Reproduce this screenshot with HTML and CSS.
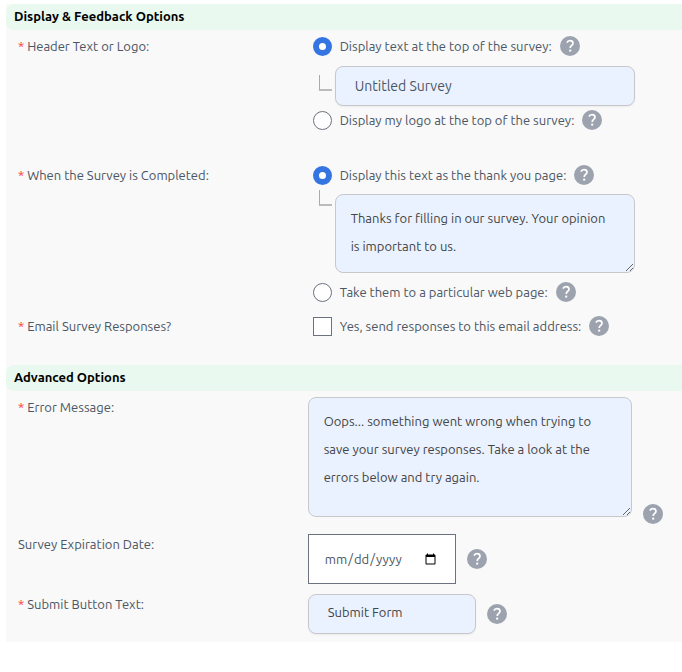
FILE: index.html
```html
<!DOCTYPE html>
<html lang="en">
<head>
    <meta charset="UTF-8">
    <meta name="viewport" content="width=device-width, initial-scale=1.0">
    <title>Survey Settings</title>
    <link rel="stylesheet" href="styles.css">
</head>
<body>
    <!-- shared help icon -->
    <svg class="sprite" aria-hidden="true">
        <symbol id="help-icon" viewBox="0 0 20 20">
            <circle cx="10" cy="10" r="10" fill="#9ca3af"/>
            <path d="M7 6.6C7.5 5.2 8.6 4.6 10 4.6c1.8 0 3 1 3 2.6 0 2.2-2.8 2.4-2.8 4.8" fill="none" stroke="#fff" stroke-width="1.7"/>
            <rect x="9.2" y="13.6" width="2" height="2" fill="#fff"/>
        </symbol>
    </svg>

    <form class="settings">
        <h2 class="section-title">Display &amp; Feedback Options</h2>

        <div class="row row-spaced">
            <div class="row-label"><span class="required">*</span> Header Text or Logo:</div>
            <div class="options">
                <div class="option">
                    <input type="radio" id="headerText" name="header" checked>
                    <label for="headerText">Display text at the top of the survey:</label>
                    <button type="button" class="help" aria-label="Help"><svg><use href="#help-icon"/></svg></button>
                </div>
                <div class="nested">
                    <span class="branch"></span>
                    <input type="text" class="field title-field" value="Untitled Survey" aria-label="Survey header text">
                </div>
                <div class="option">
                    <input type="radio" id="headerLogo" name="header">
                    <label for="headerLogo">Display my logo at the top of the survey:</label>
                    <button type="button" class="help" aria-label="Help"><svg><use href="#help-icon"/></svg></button>
                </div>
            </div>
        </div>

        <div class="row">
            <div class="row-label"><span class="required">*</span> When the Survey is Completed:</div>
            <div class="options">
                <div class="option">
                    <input type="radio" id="doneText" name="completed" checked>
                    <label for="doneText">Display this text as the thank you page:</label>
                    <button type="button" class="help" aria-label="Help"><svg><use href="#help-icon"/></svg></button>
                </div>
                <div class="nested nested-tall">
                    <span class="branch"></span>
                    <textarea class="field thanks-field" aria-label="Thank you text">Thanks for filling in our survey. Your opinion is important to us.</textarea>
                </div>
                <div class="option">
                    <input type="radio" id="donePage" name="completed">
                    <label for="donePage">Take them to a particular web page:</label>
                    <button type="button" class="help" aria-label="Help"><svg><use href="#help-icon"/></svg></button>
                </div>
            </div>
        </div>

        <div class="row row-spaced">
            <div class="row-label"><span class="required">*</span> Email Survey Responses?</div>
            <div class="options">
                <div class="option">
                    <input type="checkbox" id="emailResponses">
                    <label for="emailResponses">Yes, send responses to this email address:</label>
                    <button type="button" class="help" aria-label="Help"><svg><use href="#help-icon"/></svg></button>
                </div>
            </div>
        </div>

        <h2 class="section-title">Advanced Options</h2>

        <div class="row row-tight">
            <label class="row-label" for="errorMessage"><span class="required">*</span> Error Message:</label>
            <div class="control control-end">
                <textarea class="field error-field" id="errorMessage">Oops... something went wrong when trying to save your survey responses. Take a look at the errors below and try again.</textarea>
                <button type="button" class="help" aria-label="Help"><svg><use href="#help-icon"/></svg></button>
            </div>
        </div>

        <div class="row row-tight">
            <label class="row-label" for="expiration">Survey Expiration Date:</label>
            <div class="control">
                <input type="date" class="date-field" id="expiration">
                <button type="button" class="help" aria-label="Help"><svg><use href="#help-icon"/></svg></button>
            </div>
        </div>

        <div class="row row-tight">
            <label class="row-label" for="submitText"><span class="required">*</span> Submit Button Text:</label>
            <div class="control">
                <input type="text" class="field submit-field" id="submitText" value="Submit Form">
                <button type="button" class="help" aria-label="Help"><svg><use href="#help-icon"/></svg></button>
            </div>
        </div>
    </form>
</body>
</html>
```
FILE: styles.css
```css
* {
    box-sizing: border-box;
}
body {
    margin: 0;
    padding: 4px 0 0 6px;
    background: #fff;
    color: #4b5563;
    font-family: Ubuntu, "Noto Sans", sans-serif;
    font-size: 13px;
    line-height: 20px;
}
input,
textarea,
button {
    margin: 0;
    color: inherit;
    font: inherit;
}
.sprite {
    position: absolute;
    width: 0;
    height: 0;
}
.settings {
    padding-bottom: 4px;
    background: #f9f9f9;
}
.section-title {
    margin: 0;
    padding: 2px 8px 4px;
    background: #e9f9ef;
    border-radius: 8px 0 0 8px;
    color: #000;
    font-size: 13px;
    font-weight: 600;
}
.row {
    display: grid;
    grid-template-columns: 43% 1fr;
    padding: 6px 0 8px;
}
.row-spaced {
    padding-bottom: 29px;
}
.row-tight {
    padding-bottom: 4px;
}
.row-label {
    padding-left: 12px;
}
.required {
    color: #f33;
}
.options {
    padding-left: 16px;
}
.option {
    display: flex;
    align-items: center;
    gap: 8px;
}
.help {
    flex: none;
    width: 20px;
    height: 20px;
    padding: 0;
    background: none;
    border: none;
    cursor: pointer;
}
.help svg {
    display: block;
    width: 20px;
    height: 20px;
}

/* radios and tick box */
input[type="radio"],
input[type="checkbox"] {
    flex: none;
    appearance: none;
    width: 19px;
    height: 19px;
    background: #fff;
    border: 1px solid #6b7280;
}
input[type="radio"] {
    border-radius: 50%;
}
input[type="radio"]:checked {
    border: 6px solid #3575e2;
}

/* field hanging under a radio */
.nested {
    display: flex;
    align-items: flex-start;
    gap: 3px;
    padding: 10px 0 4px 6px;
}
.nested-tall {
    padding-top: 9px;
    padding-bottom: 9px;
}
.branch {
    flex: none;
    width: 13px;
    height: 16px;
    margin-top: 9px;
    border-left: 1px solid #aaa;
    border-bottom: 2px solid #bbb;
}
.nested-tall .branch {
    margin-top: -4px;
}
.field {
    display: block;
    background: #eaf2ff;
    border: 1px solid #c8c8cc;
    border-radius: 8px;
}
input.field {
    height: 40px;
    padding: 0 19px;
    box-shadow: 0 1px 2px rgba(0, 0, 0, 0.06);
}
textarea.field {
    padding: 9px 20px 9px 15px;
    color: #444;
    line-height: 28px;
    overflow: hidden;
}
.title-field,
.thanks-field {
    width: 300px;
}
.title-field {
    font-size: 14px;
}
.thanks-field {
    height: 79px;
}
.control {
    display: flex;
    align-items: center;
    gap: 11px;
    padding-left: 11px;
}
.control-end {
    align-items: flex-end;
}
.error-field {
    width: 324px;
    height: 120px;
    margin-bottom: 7px;
}
.date-field {
    width: 148px;
    height: 50px;
    padding: 8px 16px 8px 15px;
    background: #fff;
    border: 1px solid #6b7280;
}
input.submit-field {
    width: 168px;
    padding-bottom: 4px;
    color: #444;
}
```
